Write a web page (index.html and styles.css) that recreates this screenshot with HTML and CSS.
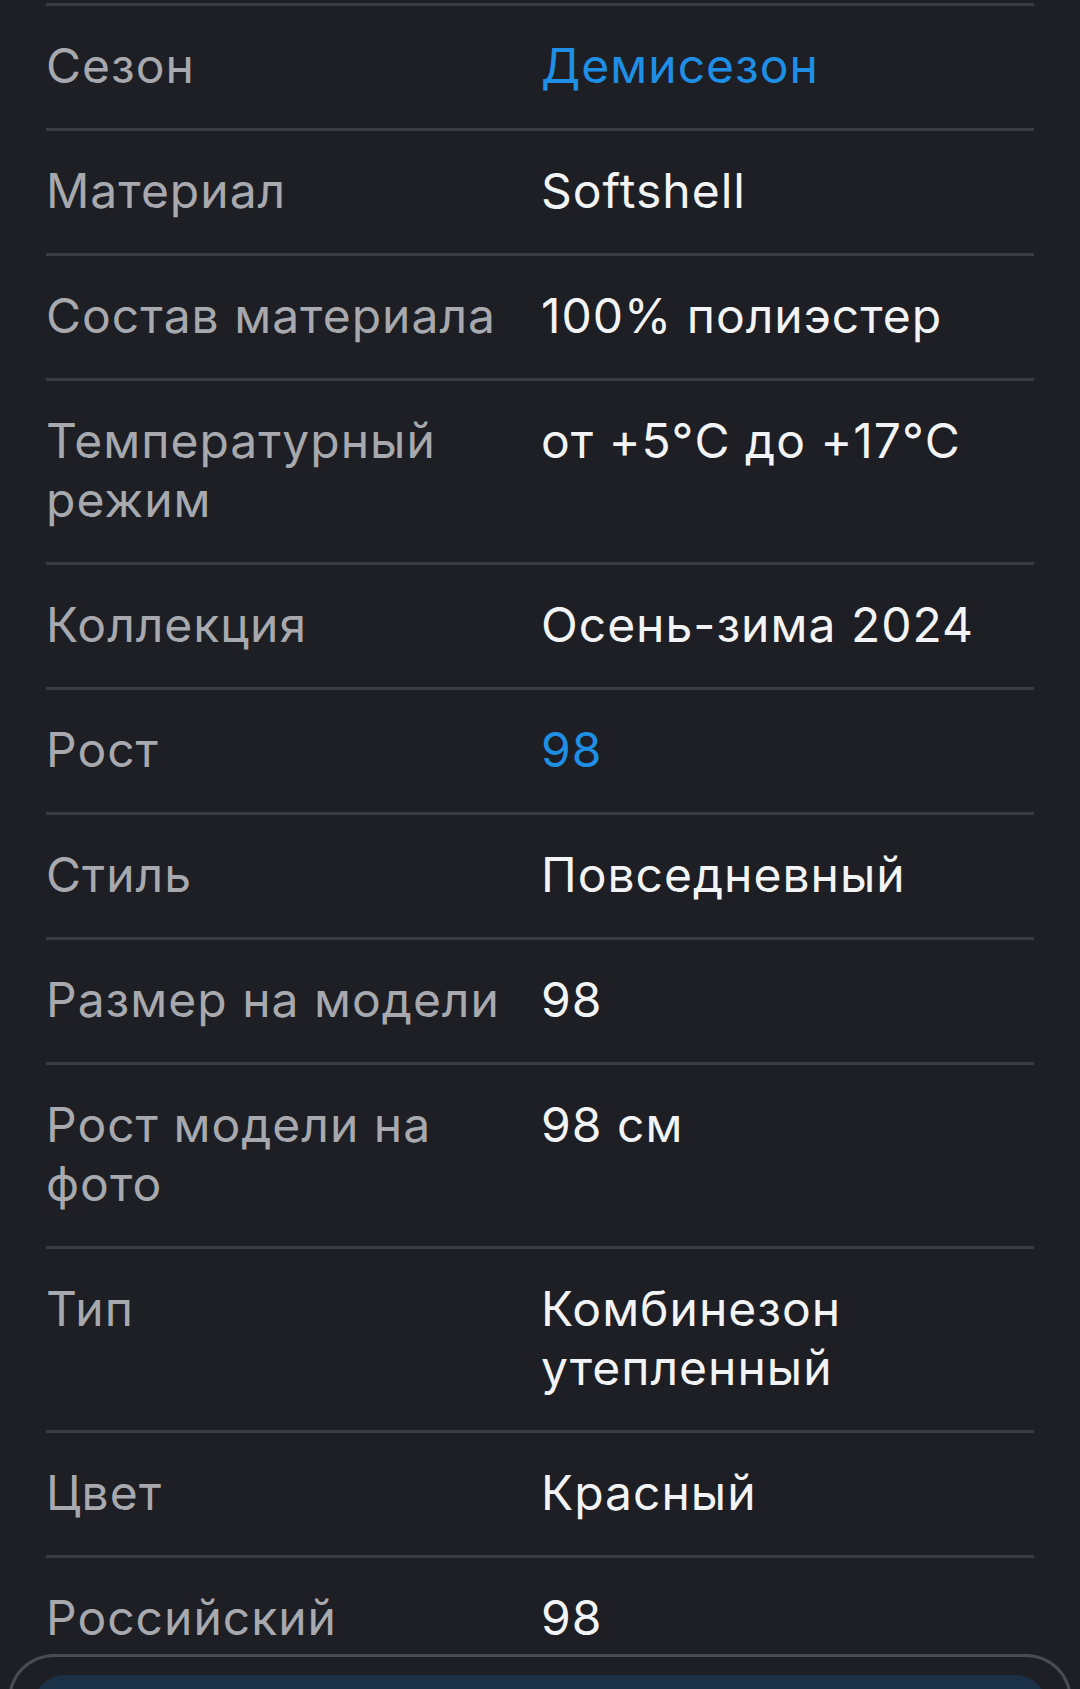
FILE: index.html
```
<!DOCTYPE html>
<html lang="ru">
<head>
    <meta charset="UTF-8">
    <meta name="viewport" content="width=device-width, initial-scale=1.0">
    <title>Характеристики</title>
    <link rel="stylesheet" href="styles.css">
</head>
<body>

    <div class="specs">
        <div class="row"><div class="label">Сезон</div><div class="value link">Демисезон</div></div>
        <div class="row"><div class="label">Материал</div><div class="value">Softshell</div></div>
        <div class="row"><div class="label">Состав материала</div><div class="value">100% полиэстер</div></div>
        <div class="row"><div class="label">Температурный режим</div><div class="value">от +5°C до +17°C</div></div>
        <div class="row"><div class="label">Коллекция</div><div class="value">Осень-зима 2024</div></div>
        <div class="row"><div class="label">Рост</div><div class="value link">98</div></div>
        <div class="row"><div class="label">Стиль</div><div class="value">Повседневный</div></div>
        <div class="row"><div class="label">Размер на модели</div><div class="value">98</div></div>
        <div class="row"><div class="label">Рост модели на фото</div><div class="value">98 см</div></div>
        <div class="row"><div class="label">Тип</div><div class="value">Комбинезон утепленный</div></div>
        <div class="row"><div class="label">Цвет</div><div class="value">Красный</div></div>
        <div class="row"><div class="label">Российский</div><div class="value">98</div></div>
    </div>

    <div class="sheet">
        <div class="sheet-inner"></div>
    </div>

</body>
</html>
```

FILE: styles.css
```
* { margin: 0; padding: 0; box-sizing: border-box; }
body { background: #1d1f24; font-family: Inter, "Noto Sans", sans-serif; padding-top: 3px; }
.specs { padding: 0 46px; }
.row { display: grid; grid-template-columns: 495px 1fr; border-top: 3px solid #393b41; padding: 30px 0 33px; font-size: 48px; line-height: 59px; letter-spacing: 1px; }
.label { color: #a7a9ae; padding-right: 28px; }
.value { color: #f2f3f5; }
.link { color: #1e8fe4; }
.sheet { position: fixed; left: 8px; right: 8px; top: 1654px; height: 80px; border: 3px solid #4a4c52; border-bottom: none; border-radius: 46px 46px 0 0; background: #1d1f24; padding: 18px 22px 0; }
.sheet-inner { height: 60px; background: #1a3147; border-radius: 32px 32px 0 0; }
```
